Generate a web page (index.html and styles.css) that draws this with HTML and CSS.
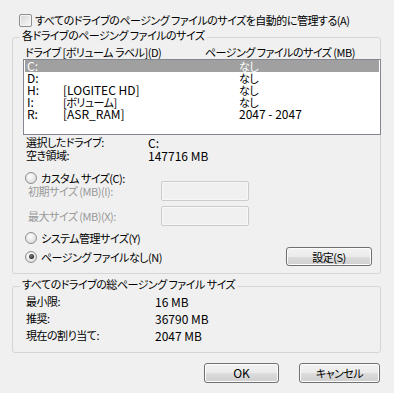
FILE: index.html
```html
<!DOCTYPE html>
<html lang="ja">
  <head>
    <meta charset="UTF-8" />
    <title>仮想メモリ</title>
    <link rel="stylesheet" href="styles.css">
  </head>
  <body>
    <div class="dialog">
      <label class="auto">
        <span class="check"></span>
        すべてのドライブのページング ファイルのサイズを自動的に管理する(A)
      </label>

      <div class="group drives">
        <span class="group-title">各ドライブのページング ファイルのサイズ</span>

        <div class="list-head">
          <span>ドライブ [ボリューム ラベル](D)</span>
          <span>ページング ファイルのサイズ (MB)</span>
        </div>

        <div class="listbox">
          <div class="row selected"><span class="num">C:</span><span></span><span>なし</span></div>
          <div class="row"><span class="num">D:</span><span></span><span>なし</span></div>
          <div class="row"><span class="num">H:</span><span class="num">[LOGITEC HD]</span><span>なし</span></div>
          <div class="row"><span class="num">I:</span><span>[ボリューム]</span><span>なし</span></div>
          <div class="row"><span class="num">R:</span><span class="num">[ASR_RAM]</span><span class="num">2047 - 2047</span></div>
        </div>

        <div class="info">
          <span>選択したドライブ:</span><span class="num">C:</span>
          <span>空き領域:</span><span class="num">147716 MB</span>
        </div>

        <label class="option custom"><span class="radio"></span>カスタム サイズ(C):</label>

        <div class="sizes">
          <span class="disabled">初期サイズ (MB)(I):</span><span class="field"></span>
          <span class="disabled">最大サイズ (MB)(X):</span><span class="field"></span>
        </div>

        <label class="option system"><span class="radio"></span>システム管理サイズ(Y)</label>

        <div class="last-row">
          <label class="option"><span class="radio on"></span>ページング ファイルなし(N)</label>
          <button class="btn set">設定(S)</button>
        </div>
      </div>

      <div class="group totals">
        <span class="group-title">すべてのドライブの総ページング ファイル サイズ</span>
        <div class="total-grid">
          <span>最小限:</span><span class="num">16 MB</span>
          <span>推奨:</span><span class="num">36790 MB</span>
          <span>現在の割り当て:</span><span class="num">2047 MB</span>
        </div>
      </div>

      <div class="buttons">
        <button class="btn ok num">OK</button>
        <button class="btn cancel">キャンセル</button>
      </div>
    </div>
  </body>
</html>
```

FILE: styles.css
```css
body {
  margin: 0;
  background-color: #f0f0f0;
  font-family: "Noto Sans CJK JP", sans-serif;
  font-size: 11px;
  letter-spacing: -0.5px;
  font-feature-settings: "palt";
  color: #000;
  white-space: nowrap;
}

.num {
  font-size: 12px;
  letter-spacing: 0;
}

.dialog {
  padding: 13px 13px 0 12px;
}

.auto {
  display: flex;
  align-items: center;
  gap: 3px;
  height: 14px;
  line-height: 14px;
  padding-left: 7px;
}

.check {
  width: 11px;
  height: 11px;
  border: 1px solid #8e8f8f;
  border-radius: 2px;
  background: linear-gradient(135deg, #d6d6d6, #f8f8f8);
  box-shadow: inset 0 0 0 1px #f4f4f4;
}

.group {
  position: relative;
  border: 1px solid #d5d5d5;
  border-radius: 3px;
}

.group-title {
  position: absolute;
  top: -10px;
  left: 7px;
  padding: 0 2px 0 2px;
  line-height: 14px;
  background-color: #f0f0f0;
}

.drives {
  margin-top: 10px;
  height: 235px;
  padding: 0 8px 0 10px;
}

.list-head {
  display: grid;
  grid-template-columns: 180px 1fr;
  margin-top: 7px;
  padding-left: 2px;
  line-height: 14px;
}

.listbox {
  margin-right: -9px;
  height: 74px;
  border: 1px solid #828790;
  background-color: #fff;
}

.row {
  display: grid;
  grid-template-columns: 36px 176px 1fr;
  height: 12px;
  line-height: 12px;
  padding-left: 3px;
}

.row.selected {
  background-color: #a0a0a0;
  color: #fff;
  margin: 0 1px;
  padding-left: 2px;
}

.info {
  display: grid;
  grid-template-columns: 122px 1fr;
  margin-top: 1px;
  padding-left: 3px;
  line-height: 13px;
}

.option {
  display: flex;
  align-items: center;
  gap: 4px;
  line-height: 14px;
  padding-left: 2px;
}

.custom {
  margin-top: 9px;
}

.radio {
  width: 10px;
  height: 10px;
  border: 1px solid #8f8f8f;
  border-radius: 50%;
  background: radial-gradient(circle at 40% 35%, #fdfdfd, #d4d4d4);
  display: grid;
  place-items: center;
}

.radio.on::after {
  content: "";
  width: 5px;
  height: 5px;
  border-radius: 50%;
  background: radial-gradient(circle at 40% 35%, #777, #111);
}

.sizes {
  display: grid;
  grid-template-columns: 133px 88px;
  row-gap: 5px;
  align-items: center;
  margin-top: -4px;
  padding-left: 5px;
}

.disabled {
  color: #999;
}

.field {
  height: 18px;
  border: 1px solid #cbcbcb;
  border-radius: 2px;
  box-shadow: inset 0 0 0 1px #f7f7f7;
}

.system {
  margin-top: 5px;
}

.last-row {
  display: flex;
  justify-content: space-between;
  align-items: center;
  margin-top: 2px;
}

.btn {
  height: 20px;
  border: 1px solid #707070;
  border-radius: 3px;
  background: linear-gradient(#f2f2f2 0%, #ebebeb 50%, #dddddd 51%, #cfcfcf 100%);
  box-shadow: inset 0 0 0 1px #fcfcfc;
  font-family: inherit;
  font-size: 11px;
  letter-spacing: -0.5px;
  font-feature-settings: "palt";
  line-height: 14px;
  padding: 0;
  color: #000;
}

.btn.num {
  font-size: 12px;
  letter-spacing: 0;
}

.set {
  width: 86px;
  height: 19px;
}

.totals {
  margin-top: 12px;
  padding: 6px 0 8px 13px;
}

.total-grid {
  display: grid;
  grid-template-columns: 129px 1fr;
  line-height: 17px;
}

.buttons {
  display: flex;
  justify-content: flex-end;
  gap: 20px;
  margin-top: 10px;
  margin-right: 1px;
}

.ok {
  width: 75px;
}

.cancel {
  width: 81px;
}
```
